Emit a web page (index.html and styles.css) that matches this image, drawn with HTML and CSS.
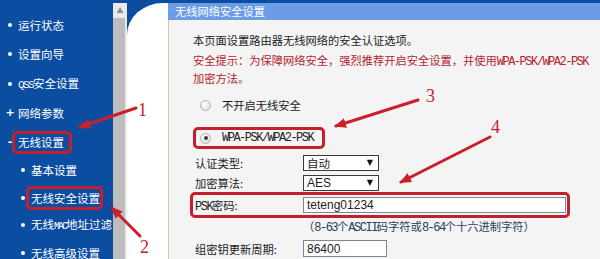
FILE: index.html
```html
<!DOCTYPE html>
<html lang="zh-CN">
<head>
<meta charset="utf-8">
<title>无线网络安全设置</title>
<link rel="stylesheet" href="styles.css">
</head>
<body>
<div class="page">
  <nav class="side">
    <ul class="menu">
      <li class="item"><span class="bul"><i class="dot"></i></span><span>运行状态</span></li>
      <li class="item"><span class="bul"><i class="dot"></i></span><span>设置向导</span></li>
      <li class="item"><span class="bul"><i class="dot"></i></span><span><span class="m sq">QSS</span>安全设置</span></li>
      <li class="item"><span class="bul sym">+</span><span>网络参数</span></li>
      <li class="item"><span class="bul sym">-</span><span class="mark m1">无线设置</span></li>
      <li class="item sub"><span class="bul"><i class="dot"></i></span><span>基本设置</span></li>
      <li class="item sub"><span class="bul"><i class="dot"></i></span><span class="mark m2">无线安全设置</span></li>
      <li class="item sub"><span class="bul"><i class="dot"></i></span><span>无线<span class="m sm">MAC</span>地址过滤</span></li>
      <li class="item sub"><span class="bul"><i class="dot"></i></span><span>无线高级设置</span></li>
    </ul>
  </nav>
  <div class="scroll"><div class="sb-btn">▲</div><div class="sb-thumb"></div></div>
  <div class="gutter"></div>
  <main class="panel">
    <div class="title">无线网络安全设置</div>
    <div class="body">
      <p class="intro">本页面设置路由器无线网络的安全认证选项。</p>
      <p class="warn">安全提示：为保障网络安全，强烈推荐开启安全设置，并使用<span class="m">WPA-PSK/WPA2-PSK</span><br>加密方法。</p>
      <div class="opt o1"><span class="radio"></span><span>不开启无线安全</span></div>
      <div class="opt o2"><span class="radio on"></span><span class="m wpa">WPA-PSK/WPA2-PSK</span></div>
      <div class="frow f1"><span class="lbl">认证类型:</span><span class="sel"><span>自动</span><i class="caret">▼</i></span></div>
      <div class="frow f2"><span class="lbl">加密算法:</span><span class="sel"><span class="lat">AES</span><i class="caret">▼</i></span></div>
      <div class="frow f3"><span class="lbl"><span class="m">PSK</span>密码:</span><span class="inp psk">teteng01234</span></div>
      <p class="hint">（<span class="m">8-63</span>个<span class="m">ASCII</span>码字符或<span class="m">8-64</span>个十六进制字符）</p>
      <div class="frow f4"><span class="lbl">组密钥更新周期:</span><span class="inp gp">86400</span></div>
    </div>
  </main>
</div>
<svg class="notes" width="600" height="259" viewBox="0 0 600 259">
  <defs>
    <marker id="ah" markerUnits="userSpaceOnUse" markerWidth="12" markerHeight="10" refX="10" refY="5" orient="auto">
      <path d="M0,0 L12,5 L0,10 z" fill="#c9202b"/>
    </marker>
  </defs>
  <g stroke="#c9202b" stroke-width="3" stroke-linecap="round" fill="none">
    <line x1="136" y1="108" x2="80" y2="127" marker-end="url(#ah)"/>
    <line x1="140" y1="236" x2="112" y2="208" marker-end="url(#ah)"/>
    <line x1="418" y1="100" x2="336" y2="126" marker-end="url(#ah)"/>
    <line x1="490" y1="137" x2="401" y2="182" marker-end="url(#ah)"/>
  </g>
  <g class="num">
    <text x="138" y="116">1</text>
    <text x="140" y="253">2</text>
    <text x="426" y="102">3</text>
    <text x="491" y="133">4</text>
  </g>
</svg>
</body>
</html>
```

FILE: styles.css
```css
* { box-sizing: border-box; margin: 0; padding: 0; }
html, body { width: 600px; height: 259px; overflow: hidden; }
body {
  position: relative;
  background: #0b4da1;
  font-family: "Noto Sans CJK SC", sans-serif;
  font-size: 11.25px;
  color: #1c1c1c;
}
.page { display: flex; height: 259px; }

/* sidebar */
.side { width: 113px; flex: none; overflow: hidden; color: #fff; font-size: 11.5px; }
.menu { list-style: none; padding-top: 10.4px; }
.item { height: 29.25px; display: flex; align-items: center; white-space: nowrap; line-height: 12px; }
.item.sub { height: 27.4px; }
.bul { width: 12px; margin-left: 4px; margin-right: 2px; flex: none; display: inline-flex; justify-content: center; align-items: center; }
.sub .bul { margin-left: 17px; }
.sym { font-family: "DejaVu Sans", sans-serif; font-weight: bold; font-size: 11px; }
.dot { display: block; width: 4px; height: 4px; border-radius: 50%; background: #fff; }
.mark { outline: 3px solid #c41f2c; border-radius: 2px; }
.m1 { padding: 2.5px 5px 2.5px 3px; margin-left: -3px; }
.m2 { padding: 3px 0 3px 2px; margin-left: -2px; }
.m { font-family: "Liberation Mono", monospace; font-size: 12px; letter-spacing: -1.5px; }
.sq { font-size: 11px; letter-spacing: -1.6px; }
.sm { font-size: 10px; letter-spacing: -2px; }

/* scrollbar + gutter */
.scroll { width: 14px; flex: none; margin-top: 3px; background: #e9e9e9; display: flex; flex-direction: column; }
.sb-btn { height: 15px; font-size: 7px; color: #8a8a8a; display: flex; align-items: center; justify-content: center; line-height: 1; }
.sb-thumb { flex: 1; background: #bdbdbd; margin-right: 2px; }
.gutter { width: 41px; flex: none; margin-top: 3px; background: #fff; border-top-left-radius: 36px 32px; }

/* content panel */
.panel { flex: 1; margin-top: 3px; display: flex; flex-direction: column; background: #f4f4f4; }
.title { height: 17px; background: #6c9ce8; color: #fff; padding-left: 7px; line-height: 17px; white-space: nowrap; }
.body { flex: 1; border-left: 1px solid #dcc59a; padding-left: 24px; }
.intro { margin-top: 12px; line-height: 16px; }
.warn { margin-top: 4px; line-height: 16px; color: #b3232d; white-space: nowrap; }

.opt { display: flex; align-items: center; white-space: nowrap; }
.o1 { height: 14px; margin-top: 12px; padding-left: 7px; }
.o2 { height: 16px; margin-top: 18px; margin-left: 3px; width: 126px; padding-left: 4px; outline: 3px solid #c41f2c; border-radius: 2px; }
.radio {
  position: relative; flex: none;
  width: 11px; height: 11px; margin-right: 11px;
  border-radius: 50%; border: 1px solid #b3b3b3;
  background: radial-gradient(circle at 40% 35%, #ffffff, #d8d8d8);
}
.radio.on::after {
  content: ""; position: absolute; left: 2.5px; top: 2.5px;
  width: 4px; height: 4px; border-radius: 50%; background: #3a3a3a;
}
.wpa { color: #222; }

.frow { display: flex; align-items: center; padding-left: 2px; width: 374px; white-space: nowrap; }
.lbl { width: 108px; flex: none; }
.f1 { margin-top: 9px; height: 16px; }
.f2 { margin-top: 4px; height: 16px; }
.f3 { margin-top: 4px; height: 20px; outline: 3px solid #c41f2c; border-radius: 2px; }
.f4 { margin-top: 5px; height: 17px; }

.sel {
  width: 76px; height: 16px; background: #fff; border: 1px solid #3a3a3a;
  display: flex; align-items: center; justify-content: space-between;
  padding: 0 5px 0 3px; font-size: 11.5px; line-height: 14px;
}
.lat { font-family: "Liberation Sans", sans-serif; font-size: 12px; }
.caret { font-style: normal; font-size: 8px; color: #111; font-family: "DejaVu Sans", sans-serif; }
.inp {
  height: 16px; background: #fff; border: 1px solid #7d8694;
  font-family: "Liberation Sans", sans-serif; font-size: 12px; line-height: 14px;
  padding-left: 3px; display: flex; align-items: center;
}
.psk { width: 263px; }
.gp { width: 84px; height: 17px; }
.hint { margin-top: 4px; line-height: 14px; padding-left: 110px; color: #2c3b5e; white-space: nowrap; }

/* annotation overlay */
.notes { position: absolute; left: 0; top: 0; pointer-events: none; }
.num text { font-family: "Liberation Serif", serif; font-size: 18px; fill: #c9202b; }
```
